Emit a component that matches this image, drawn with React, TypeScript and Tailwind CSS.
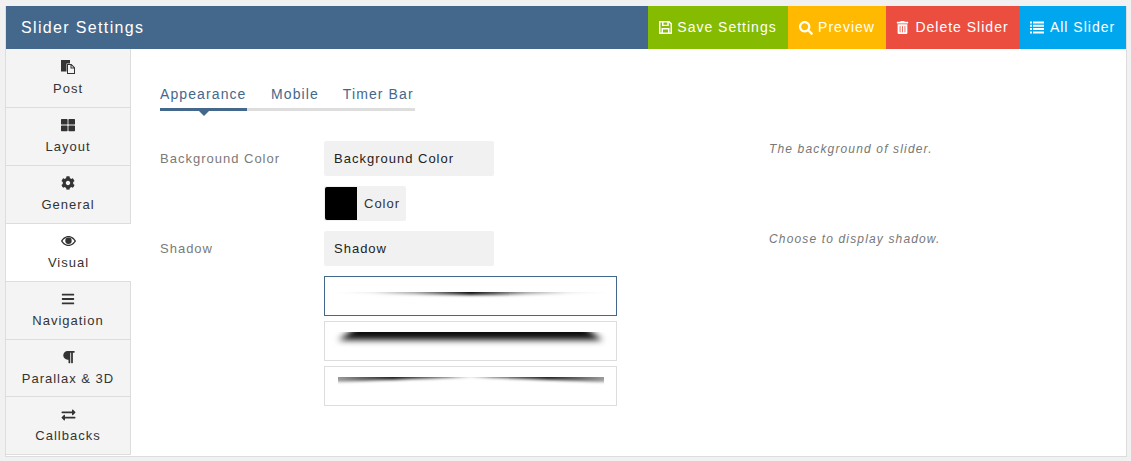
import { FaThLarge, FaCog, FaBars, FaParagraph, FaExchangeAlt, FaSearch, FaTrashAlt } from 'react-icons/fa';

// font-awesome 4 style glyphs that the package does not carry
function FilesIcon({ className }: { className?: string }) {
    return (
        <svg className={className} width="14" height="14" viewBox="0 0 14 14" fill="currentColor">
            <path d="M0 0H9V3.500H5.500V11.500H0V0Z" />
            <path fillRule="evenodd" d="M6 4H10.500L14 7.500V14H6V4ZM7 5V13H13V8.500H9.500V5H7ZM10.500 5.400V7.500H12.600L10.500 5.400Z" />
        </svg>
    );
}

function EyeIcon({ className }: { className?: string }) {
    return (
        <svg className={className} width="15" height="14" viewBox="0 0 15 14" fill="currentColor">
            <path fillRule="evenodd" d="M7.500 2C11 2 13.700 4.600 15 7C13.700 9.400 11 12 7.500 12C4 12 1.300 9.400 0 7C1.300 4.600 4 2 7.500 2ZM7.500 3.200C5 3.200 2.900 5 1.500 7C2.900 9 5 10.800 7.500 10.800C10 10.800 12.100 9 13.500 7C12.100 5 10 3.200 7.500 3.200Z" />
            <circle cx="7.500" cy="6.700" r="3.200" />
        </svg>
    );
}

function SaveIcon({ className }: { className?: string }) {
    return (
        <svg className={className} width="13" height="13" viewBox="0 0 13 13" fill="currentColor">
            <path fillRule="evenodd" d="M0 0H10.500L13 2.500V13H0V0ZM1.500 1.500V11.500H2.500V7H10.500V11.500H11.500V3.200L9.800 1.500V5H3V1.500H1.500ZM4.500 1.500V3.700H8.300V1.500H4.500ZM4 8.500V11.500H9V8.500H4Z" />
        </svg>
    );
}

function ListIcon({ className }: { className?: string }) {
    return (
        <svg className={className} width="14" height="13" viewBox="0 0 14 13" fill="currentColor">
            <path d="M0 0.500H2V2.500H0ZM3 0.500H14V2.500H3ZM0 3.800H2V5.800H0ZM3 3.800H14V5.800H3ZM0 7.100H2V9.100H0ZM3 7.100H14V9.100H3ZM0 10.400H2V12.400H0ZM3 10.400H14V12.400H3Z" />
        </svg>
    );
}

const sideItems = [
    { label: 'Post', icon: <FilesIcon />, h: 'h-[59px]', pt: 'pt-[11px]', gap: 'mt-[7px]' },
    { label: 'Layout', icon: <FaThLarge className="text-[14px] h-[14px]" />, h: 'h-[58px]', pt: 'pt-[10px]', gap: 'mt-[7px]' },
    { label: 'General', icon: <FaCog className="text-[14px] h-[14px]" />, h: 'h-[58px]', pt: 'pt-[10px]', gap: 'mt-[7px]' },
    { label: 'Visual', icon: <EyeIcon />, h: 'h-[58px]', pt: 'pt-[10px]', gap: 'mt-[7px]', active: true },
    { label: 'Navigation', icon: <FaBars className="text-[14px] h-[14px]" />, h: 'h-[58px]', pt: 'pt-[10px]', gap: 'mt-[7px]' },
    { label: 'Parallax & 3D', icon: <FaParagraph className="text-[13px] h-[14px]" />, h: 'h-[57px]', pt: 'pt-[10px]', gap: 'mt-[7px]' },
    { label: 'Callbacks', icon: <FaExchangeAlt className="text-[15px] h-[14px]" />, h: 'h-[58px]', pt: 'pt-[11px]', gap: 'mt-[6px]' },
];

function ShadowOne() {
    return (
        <svg width="291" height="38" viewBox="0 0 291 38">
            <defs>
                <filter id="s1" x="-10%" y="-200%" width="120%" height="500%">
                    <feGaussianBlur stdDeviation="1.500" />
                </filter>
                <linearGradient id="g1" x1="0" x2="1" y1="0" y2="0">
                    <stop offset="0" stopColor="#000" stopOpacity="0" />
                    <stop offset="0.15" stopColor="#000" stopOpacity="0.08" />
                    <stop offset="0.3" stopColor="#000" stopOpacity="0.35" />
                    <stop offset="0.5" stopColor="#000" stopOpacity="0.95" />
                    <stop offset="0.7" stopColor="#000" stopOpacity="0.35" />
                    <stop offset="0.85" stopColor="#000" stopOpacity="0.08" />
                    <stop offset="1" stopColor="#000" stopOpacity="0" />
                </linearGradient>
                <clipPath id="c1"><rect x="0" y="15" width="291" height="23" /></clipPath>
            </defs>
            <g clipPath="url(#c1)">
                <path d="M6 8 L285 8 L285 15 Q146 21 6 15 Z" fill="url(#g1)" filter="url(#s1)" />
            </g>
        </svg>
    );
}

function ShadowTwo() {
    return (
        <svg width="291" height="38" viewBox="0 0 291 38">
            <defs>
                <filter id="s2" x="-10%" y="-100%" width="120%" height="300%">
                    <feGaussianBlur stdDeviation="3" />
                </filter>
                <clipPath id="c2"><rect x="0" y="10" width="291" height="28" /></clipPath>
            </defs>
            <g clipPath="url(#c2)">
                <path d="M34 2 L257 2 Q268 12 278 18 L13 18 Q23 12 34 2 Z" fill="#000" fillOpacity="0.95" filter="url(#s2)" />
            </g>
        </svg>
    );
}

function ShadowThree() {
    return (
        <svg width="291" height="38" viewBox="0 0 291 38">
            <defs>
                <filter id="s3" x="-10%" y="-200%" width="120%" height="500%">
                    <feGaussianBlur stdDeviation="1.600" />
                </filter>
                <linearGradient id="g3" x1="0" x2="1" y1="0" y2="0">
                    <stop offset="0" stopColor="#000" stopOpacity="0.35" />
                    <stop offset="0.22" stopColor="#000" stopOpacity="0.9" />
                    <stop offset="0.42" stopColor="#000" stopOpacity="0.6" />
                    <stop offset="0.5" stopColor="#000" stopOpacity="0.15" />
                    <stop offset="0.58" stopColor="#000" stopOpacity="0.6" />
                    <stop offset="0.78" stopColor="#000" stopOpacity="0.9" />
                    <stop offset="1" stopColor="#000" stopOpacity="0.35" />
                </linearGradient>
                <clipPath id="c3"><rect x="13" y="10" width="266" height="28" /></clipPath>
            </defs>
            <g clipPath="url(#c3)">
                <path d="M8 3 L283 3 L283 15 Q230 13 146 10 Q62 13 8 15 Z" fill="url(#g3)" filter="url(#s3)" />
            </g>
        </svg>
    );
}

export default function App() {
    return (
        <div className="w-[1131px] h-[461px] bg-[#f1f1f1] pt-[6px] pl-[5px] pr-[4px] font-['Liberation_Sans',sans-serif] tracking-[1px] overflow-hidden">
            <div className="h-[451px] bg-white border-x border-b border-[#ddd] flex flex-col">
                {/* Header */}
                <div className="h-[43px] bg-[#44688c] flex items-stretch justify-between text-white shrink-0">
                    <div className="pl-[15px] text-[16px] leading-[43px] tracking-[1.35px]">Slider Settings</div>
                    <div className="flex text-[14px]">
                        <a className="w-[140px] bg-[#85bb00] flex items-center justify-center gap-[5px]"><SaveIcon />Save Settings</a>
                        <a className="w-[98px] bg-[#ffb900] flex items-center justify-center gap-[5px]"><FaSearch className="text-[14px]" />Preview</a>
                        <a className="w-[133px] bg-[#eb4e3f] flex items-center justify-center gap-[6px]"><FaTrashAlt className="text-[13px]" />Delete Slider</a>
                        <a className="w-[107px] bg-[#00a7ef] flex items-center justify-center gap-[6px]"><ListIcon />All Slider</a>
                    </div>
                </div>
                <div className="flex flex-1">
                    {/* Sidebar */}
                    <div className="w-[125px] shrink-0 flex flex-col">
                        {sideItems.map((item) => (
                            <div key={item.label} className={`${item.h} ${item.pt} border-b border-[#ddd] flex flex-col items-center text-[13px] text-[#333] ${item.active ? 'bg-white' : 'bg-[#f4f4f4] border-r'}`}>
                                {item.icon}
                                <span className={`${item.gap} leading-[15px]`}>{item.label}</span>
                            </div>
                        ))}
                    </div>
                    {/* Content */}
                    <div className="flex-1 pl-[29px] pt-[29px]">
                        <div className="flex w-[255px] h-[33px] border-b-[3px] border-[#ddd] text-[14px] text-[#44688c] leading-[32px] tracking-[1.1px]">
                            <div className="relative w-[87px] h-[33px] border-b-[3px] border-[#44688c]">
                                Appearance
                                <span className="absolute left-[39px] top-[33px] w-0 h-0 border-x-[5px] border-x-transparent border-t-[5px] border-t-[#44688c]" />
                            </div>
                            <div className="ml-[24px]">Mobile</div>
                            <div className="ml-[24px]">Timer Bar</div>
                        </div>
                        <div className="mt-[30px] flex">
                            <div className="w-[164px] pt-[10px] text-[13px] leading-[15px] text-[#7a7a7a]">Background Color</div>
                            <div className="w-[445px]">
                                <div className="w-[170px] h-[35px] bg-[#f1f1f1] rounded-[2px] pl-[10px] text-[13px] leading-[35px] text-[#222]">Background Color</div>
                                <div className="mt-[10px] w-[82px] h-[35px] bg-[#f1f1f1] rounded-[2px] p-[1px] flex items-center text-[13px] text-[#333]">
                                    <span className="w-[32px] h-[33px] bg-black rounded-l-[2px]" />
                                    <span className="ml-[7px]">Color</span>
                                </div>
                            </div>
                            <div className="pt-[1px] text-[12px] leading-[15px] italic text-[#777] tracking-[1.15px]">The background of slider.</div>
                        </div>
                        <div className="mt-[10px] flex">
                            <div className="w-[164px] pt-[10px] text-[13px] leading-[15px] text-[#7a7a7a]">Shadow</div>
                            <div className="w-[445px]">
                                <div className="w-[170px] h-[35px] bg-[#f1f1f1] rounded-[2px] pl-[10px] text-[13px] leading-[35px] text-[#222]">Shadow</div>
                                <div className="mt-[10px] flex flex-col gap-[5px] w-[293px]">
                                    <div className="h-[40px] border border-[#44688c]"><ShadowOne /></div>
                                    <div className="h-[40px] border border-[#ddd]"><ShadowTwo /></div>
                                    <div className="h-[40px] border border-[#ddd]"><ShadowThree /></div>
                                </div>
                            </div>
                            <div className="pt-[1px] text-[12px] leading-[15px] italic text-[#777] tracking-[1.15px]">Choose to display shadow.</div>
                        </div>
                    </div>
                </div>
            </div>
        </div>
    );
}
